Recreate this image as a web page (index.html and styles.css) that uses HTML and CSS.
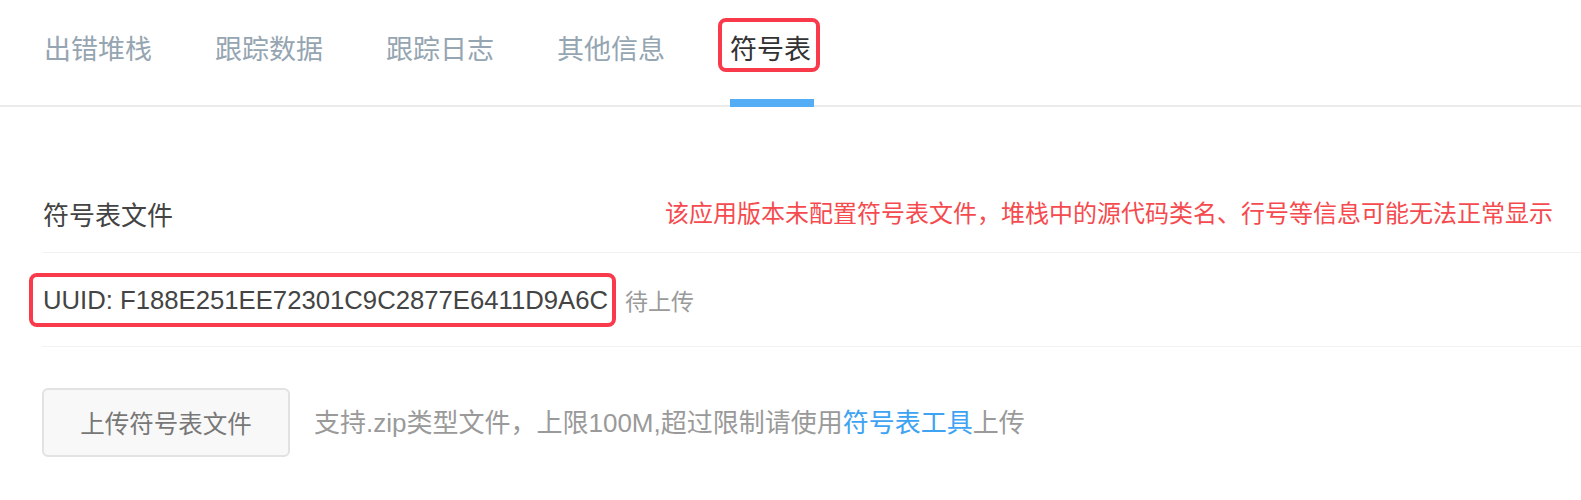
FILE: index.html
```html
<!DOCTYPE html>
<html lang="zh-CN">
<head>
<meta charset="utf-8">
<title>符号表</title>
<link rel="stylesheet" href="styles.css">
</head>
<body>
  <nav class="tabs">
    <div class="tab">出错堆栈</div>
    <div class="tab">跟踪数据</div>
    <div class="tab">跟踪日志</div>
    <div class="tab">其他信息</div>
    <div class="tab tab-active">符号表<span class="mark mark-tab"></span><span class="underline"></span></div>
  </nav>
  <section class="content">
    <div class="row row-head">
      <span class="label">符号表文件</span>
      <span class="warn">该应用版本未配置符号表文件，堆栈中的源代码类名、行号等信息可能无法正常显示</span>
    </div>
    <div class="row row-uuid">
      <span class="uuid">UUID: F188E251EE72301C9C2877E6411D9A6C<span class="mark mark-uuid"></span></span>
      <span class="status">待上传</span>
    </div>
    <div class="row row-upload">
      <button class="btn">上传符号表文件</button>
      <span class="hint">支持.zip类型文件，上限100M,超过限制请使用<a class="link">符号表工具</a>上传</span>
    </div>
  </section>
</body>
</html>
```

FILE: styles.css
```css
html, body {
  margin: 0;
  padding: 0;
  background: #ffffff;
}
body {
  font-family: "Liberation Sans", "Noto Sans CJK SC", sans-serif;
  color: #333;
  width: 1581px;
  overflow: hidden;
}
.tabs {
  display: flex;
  gap: 63px;
  padding-left: 44px;
  height: 105px;
  border-bottom: 2px solid #ebebeb;
  box-sizing: content-box;
}
.tab {
  position: relative;
  font-family: "Noto Sans CJK SC", sans-serif;
  font-size: 27px;
  line-height: 27px;
  padding-top: 34px;
  color: #95a5b1;
  white-space: nowrap;
}
.tab-active {
  color: #333;
  margin-left: 2px;
}
.underline {
  position: absolute;
  left: 0;
  width: 84px;
  top: 99px;
  height: 8px;
  background: #55aef5;
}
.mark {
  position: absolute;
  border: 4px solid #f83a4b;
  border-radius: 8px;
  box-sizing: border-box;
  pointer-events: none;
}
.mark-tab {
  left: -12px;
  top: 18px;
  width: 102px;
  height: 54px;
}
.content {
  padding-top: 69px;
  padding-left: 42px;
}
.row {
  display: flex;
  align-items: center;
}
.row-head {
  height: 76px;
  justify-content: space-between;
  border-bottom: 1px solid #f2f2f2;
}
.label {
  font-family: "Noto Sans CJK SC", sans-serif;
  font-size: 26px;
  line-height: 26px;
  color: #444;
  padding-left: 1px;
}
.warn {
  font-family: "Noto Sans CJK SC", sans-serif;
  font-size: 24px;
  line-height: 26px;
  color: #f54a4e;
  padding-right: 28px;
  margin-top: -4px;
}
.row-uuid {
  height: 93px;
  border-bottom: 1px solid #f2f2f2;
}
.uuid {
  position: relative;
  font-size: 25.7px;
  line-height: 26px;
  color: #444;
  padding-left: 1px;
}
.mark-uuid {
  left: -13px;
  right: -8px;
  top: -14px;
  bottom: -14px;
}
.status {
  font-family: "Noto Sans CJK SC", sans-serif;
  font-size: 23px;
  line-height: 26px;
  color: #9a9a9a;
  margin-left: 17px;
}
.row-upload {
  padding-top: 41px;
}
.btn {
  width: 248px;
  height: 69px;
  border: 2px solid #e2e2e2;
  border-radius: 6px;
  background: #f8f8f8;
  font-family: "Noto Sans CJK SC", sans-serif;
  font-size: 24.5px;
  color: #777;
  padding: 0;
}
.hint {
  font-size: 26px;
  line-height: 26px;
  color: #9a9a9a;
  margin-left: 24px;
}
.link {
  color: #3ea3f2;
  text-decoration: none;
}
```
